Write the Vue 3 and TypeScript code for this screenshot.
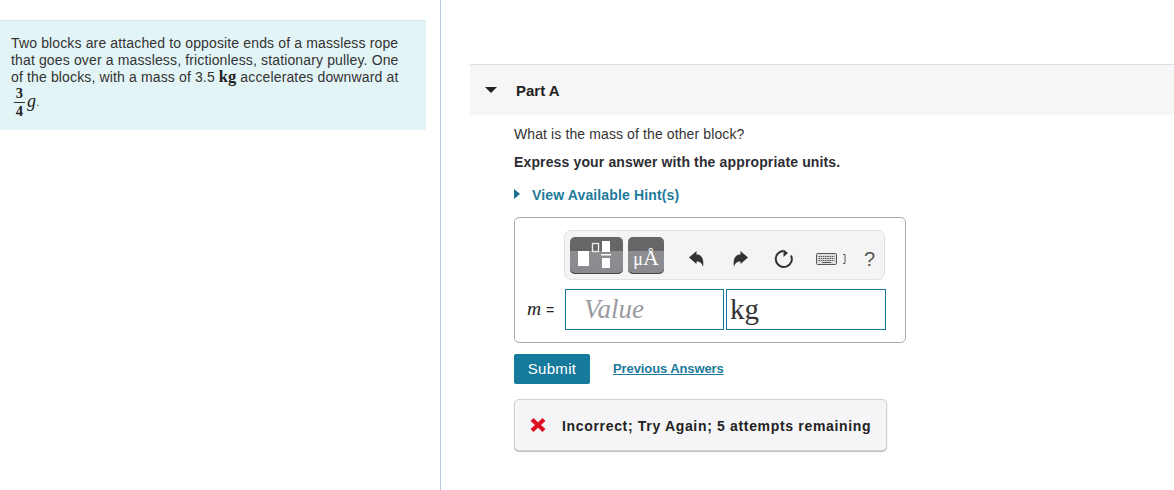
<script setup lang="ts">
const lines: string[] = [
  'Two blocks are attached to opposite ends of a massless rope',
  'that goes over a massless, frictionless, stationary pulley. One',
]
</script>

<template>
  <div class="page">
    <aside class="left">
      <div class="intro">
        <div v-for="l in lines" :key="l" class="line">{{ l }}</div>
        <div class="line">of the blocks, with a mass of 3.5 <span class="unit">kg</span> accelerates downward at</div>
        <div class="mathline">
          <span class="frac"><span class="num">3</span><span class="den">4</span></span><span class="gvar">g</span><span class="dot">.</span>
        </div>
      </div>
    </aside>
    <main class="right">
      <header class="parthead">
        <span class="caret"></span>
        <span class="parttitle">Part A</span>
      </header>
      <section class="body">
        <p class="q">What is the mass of the other block?</p>
        <p class="express">Express your answer with the appropriate units.</p>
        <div class="hint"><span class="hintcaret"></span><span>View Available Hint(s)</span></div>
        <div class="answer">
          <div class="toolbar">
            <div class="tbtn tbig">
              <svg width="53" height="37" viewBox="0 0 53 37">
                <rect x="8" y="14" width="11" height="15" fill="#fff"/>
                <rect x="22.500" y="6.500" width="6" height="8" fill="none" stroke="#e8e8e8" stroke-width="1.400"/>
                <rect x="32" y="4" width="8" height="11" fill="#fff"/>
                <rect x="31" y="17" width="10" height="1.500" fill="#fff"/>
                <rect x="32" y="21" width="8" height="10" fill="#fff"/>
              </svg>
            </div>
            <div class="tbtn tsmall">
              <span class="mua"><span class="mu">μ</span><span class="ang">Å</span></span>
            </div>
            <div class="tools">
              <svg class="ic undo" width="16" height="16" viewBox="0 0 16 16"><path d="M0 6.500 L7.500 0 V3.500 C12 3.500 15.500 7 14 16 C13 12 11 10.500 7.500 10.500 V13 Z" fill="#333"/></svg>
              <svg class="ic redo" width="16" height="16" viewBox="0 0 16 16"><path d="M15 6.500 L7.500 0 V3.500 C3 3.500 -0.500 7 1 16 C2 12 4 10.500 7.500 10.500 V13 Z" fill="#333"/></svg>
              <svg class="ic reset" width="20" height="20" viewBox="0 0 20 20"><path d="M17 6.500 A8 8 0 1 1 9.500 2" fill="none" stroke="#333" stroke-width="2"/><path d="M9.500 0.500 L14 4 L9.500 8 Z" fill="#333"/></svg>
              <svg class="ic kb" width="30" height="14" viewBox="0 0 30 14">
                <rect x="0.500" y="1.500" width="20" height="11" rx="1" fill="#ddd" stroke="#555"/>
                <path d="M2.500 4.500 H18.500 M2.500 6.500 H18.500 M2.500 8.500 H18.500" stroke="#555" stroke-dasharray="1.500 .7"/>
                <path d="M6 10.500 H15" stroke="#555"/>
                <path d="M27 2.500 H29 V11.500 H27" fill="none" stroke="#555"/>
              </svg>
              <span class="help">?</span>
            </div>
          </div>
          <div class="inputs">
            <span class="label"><i class="mvar">m</i> =</span>
            <div class="field value">Value</div>
            <div class="field kg">kg</div>
          </div>
        </div>
        <div class="actions">
          <div class="submit">Submit</div>
          <a class="prev">Previous Answers</a>
        </div>
        <div class="feedback">
          <svg class="xmark" width="16" height="16" viewBox="0 0 16 16"><path d="M3.500 1 L8 5.200 L12.500 1 L15.500 4 L11 8 L15.500 12 L12.500 15 L8 10.800 L3.500 15 L0.500 12 L5 8 L0.500 4 Z" fill="#dd1122"/></svg>
          <span>Incorrect; Try Again; 5 attempts remaining</span>
        </div>
      </section>
    </main>
  </div>
</template>

<style>
html, body { margin: 0; background: #fff; }
</style>

<style scoped>
.page {
  display: flex;
  width: 1174px;
  height: 490px;
  overflow: hidden;
  font-family: "Liberation Sans", Arial, sans-serif;
  font-size: 14px;
  color: #333;
}
.left {
  width: 441px;
  flex: none;
  box-sizing: border-box;
  border-right: 1px solid #b9c8dc;
  padding-top: 20px;
}
.intro {
  width: 426px;
  height: 110px;
  box-sizing: border-box;
  padding: 14px 0 0 11px;
  background: #e3f4f6;
  border-top: 1px solid #d3e6e8;
  letter-spacing: .14px;
}
.line { height: 17px; line-height: 17px; white-space: nowrap; }
.unit { font-family: "Liberation Serif", serif; font-weight: 700; font-size: 16.500px; color: #222; letter-spacing: 0; line-height: 0; }
.mathline { display: flex; align-items: center; height: 34px; font-family: "Liberation Serif", serif; color: #222; }
.frac { display: inline-flex; flex-direction: column; align-items: center; width: 11px; margin-left: 3px; margin-top: -2px; font-size: 14.500px; font-weight: 700; line-height: 13px; }
.num { border-bottom: 1px solid #333; width: 11px; text-align: center; padding-bottom: 2px; }
.den { padding-top: 2px; }
.gvar { font-style: italic; font-size: 18px; margin-left: 2px; margin-top: -3px; }
.dot { font-size: 12px; color: #666; margin-top: -2px; }

.right {
  flex: 1;
  padding: 64px 0 0 29px;
  min-width: 0;
}
.parthead {
  display: flex;
  align-items: center;
  height: 51px;
  box-sizing: border-box;
  background: #f6f6f6;
  border-top: 1px solid #d8e2e4;
  padding-left: 15px;
}
.caret {
  width: 0; height: 0;
  border-left: 6px solid transparent;
  border-right: 6px solid transparent;
  border-top: 6px solid #222;
  margin-top: -1px;
}
.parttitle { margin-left: 19px; font-weight: 700; color: #222; font-size: 15px; }
.body { padding-left: 44px; }
.q { margin: 11px 0 0; line-height: 17px; letter-spacing: .11px; }
.express { margin: 11px 0 0; line-height: 17px; font-weight: 700; color: #2d2d33; letter-spacing: .14px; }
.hint {
  display: flex;
  align-items: center;
  margin-top: 15px;
  height: 17px;
  color: #1d7a9b;
  font-weight: 700;
  letter-spacing: .14px;
}
.hintcaret {
  width: 0; height: 0;
  border-top: 5.500px solid transparent;
  border-bottom: 5.500px solid transparent;
  border-left: 6px solid #1a6f8f;
  margin-right: 12px;
  margin-top: -2px;
}
.answer {
  margin-top: 14px;
  width: 392px;
  height: 126px;
  box-sizing: border-box;
  border: 1px solid #a9a9a9;
  border-radius: 5px;
  padding: 12px 0 0 49px;
  background: #fff;
}
.toolbar {
  display: flex;
  align-items: center;
  width: 321px;
  height: 50px;
  box-sizing: border-box;
  padding-left: 5px;
  background: #f4f4f4;
  border: 1px solid #e2e2e2;
  border-radius: 7px;
}
.tbtn {
  height: 37px;
  border-radius: 5px;
  background: linear-gradient(#666 0, #666 38%, #8e8e92 38%, #8a8a8e 100%);
  box-shadow: inset 0 -1px 0 #444;
  display: flex;
  align-items: center;
  justify-content: center;
}
.tbig { width: 53px; }
.tsmall { width: 36px; margin-left: 5px; }
.mua { font-family: "Liberation Serif", serif; color: #fff; display: flex; align-items: baseline; margin-top: 6px; }
.mu { font-size: 18px; }
.ang { font-size: 22px; }
.tools { flex: 1; height: 100%; display: flex; align-items: center; padding-top: 8px; box-sizing: border-box; }
.ic { flex: none; }
.undo { margin-left: 25px; }
.redo { margin-left: 28px; }
.reset { margin-left: 25px; }
.kb { margin-left: 22px; }
.help { margin-left: 18px; color: #555; font-size: 20px; }
.inputs { display: flex; align-items: center; margin-top: 9px; margin-left: -37px; height: 41px; }
.label { width: 38px; font-size: 14px; color: #222; text-align: left; white-space: nowrap; }
.mvar { font-family: "Liberation Serif", serif; font-style: italic; font-size: 19.500px; line-height: 0; margin-right: 1px; }
.field {
  box-sizing: border-box;
  height: 41px;
  border: 1px solid #17799b;
  font-family: "Liberation Serif", serif;
  font-size: 27px;
  line-height: 39px;
  background: #fff;
}
.value { width: 159px; padding-left: 18px; font-style: italic; color: #9a9aa0; }
.kg { width: 160px; margin-left: 2px; padding-left: 3px; color: #333; font-size: 29px; }
.actions { display: flex; align-items: center; margin-top: 11px; height: 30px; }
.submit {
  width: 76px; height: 30px;
  line-height: 30px;
  text-align: center;
  background: #167a9c;
  color: #fff;
  border-radius: 2px;
  font-size: 15px;
  letter-spacing: .3px;
}
.prev { margin-left: 23px; margin-top: -2px; color: #1d7a9b; font-weight: 700; font-size: 13px; letter-spacing: -.1px; text-decoration: underline; }
.feedback {
  display: flex;
  align-items: center;
  margin-top: 15px;
  width: 373px;
  height: 52px;
  box-sizing: border-box;
  padding: 2px 0 0 15px;
  background: #f5f5f7;
  border: 1px solid #d0d0d0;
  border-radius: 5px;
  box-shadow: 0 1px 1px #bbb;
  font-weight: 700;
  color: #222;
  letter-spacing: .67px;
}
.xmark { margin-top: -2px; }
.feedback span { margin-left: 16px; }
</style>
